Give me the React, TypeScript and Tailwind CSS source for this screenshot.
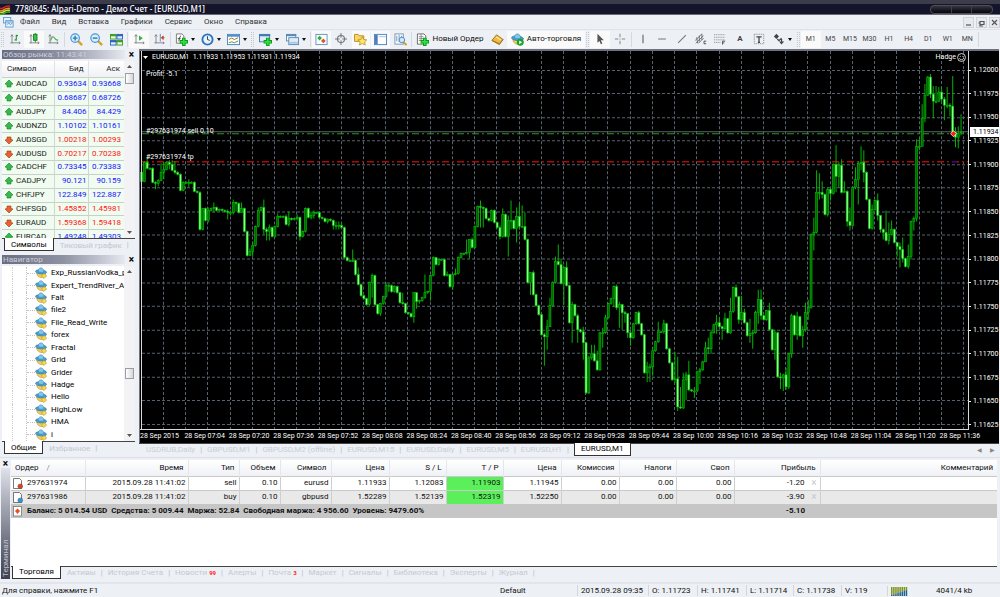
import React from "react";

type Candle = [number, number?, number?];

/* One entry per minute bar: close level, then optional high and low. Each bar opens at the previous close. */
const BARS: Candle[] = [
  [182], [163], [169, 158, 170], [169], [183], [184, 182, 190], [181, 180, 187], [173, 164, 182], [170, 163, 180], [163, 162, 171],
  [165, 161, 170], [171, 161, 172], [173, 162, 175], [175], [191], [183], [183], [183, 180, 188], [183], [192],
  [193], [230], [209, 209, 231], [221], [211, 208, 223], [209], [208, 203, 213], [211], [210], [211],
  [212], [213, 210, 220], [213, 211, 216], [203, 200, 215], [204, 202, 212], [213, 203, 214], [209, 203, 212], [232], [256], [252, 249, 255],
  [246, 242, 257], [227], [211, 208, 228], [208, 207, 212], [230, 200, 235], [232, 228, 241], [228, 225, 241], [237], [227], [217, 214, 228],
  [217], [217], [225, 215, 226], [219, 212, 227], [220], [219], [218, 215, 221], [237, 217, 241], [232], [209],
  [218], [216, 212, 220], [213, 211, 219], [213], [218], [219], [222], [220, 219, 224], [221], [226, 220, 230],
  [226, 222, 230], [226, 222, 230], [228, 223, 229], [258], [261], [261], [261, 250, 262], [275], [285, 268, 286], [296],
  [299], [305], [283], [276, 274, 298], [305], [314], [304, 303, 316], [297], [286, 283, 298], [286, 284, 292],
  [292], [287], [293], [303], [304, 293, 305], [313], [314], [317], [293, 293, 323], [302, 293, 309],
  [301, 300, 304], [298], [293, 275, 299], [292], [276, 275, 301], [258], [265, 258, 266], [260], [260], [276],
  [275, 272, 277], [287], [275, 274, 290], [274, 269, 276], [258], [254], [254], [253, 240, 255], [240, 240, 259], [248, 238, 249],
  [227], [207], [208, 201, 228], [209, 207, 228], [219], [221], [211], [223, 210, 224], [228], [237, 226, 240],
  [215, 209, 238], [237], [221, 216, 257], [221, 201, 230], [229], [217, 208, 243], [227, 204, 230], [227, 206, 228], [240, 213, 241], [283],
  [273, 273, 295], [295, 271, 296], [306], [315], [335], [337, 333, 366], [327, 320, 350], [306, 298, 327], [283], [262, 257, 284],
  [265, 245, 266], [284, 259, 285], [268, 266, 305], [286, 262, 287], [323], [305, 302, 343], [316], [330, 314, 343], [332], [343, 327, 360],
  [393], [358, 356, 394], [354, 345, 360], [361, 345, 362], [370, 351, 371], [333], [333, 328, 348], [318, 315, 334], [304], [299],
  [287, 286, 307], [308, 285, 310], [305, 302, 328], [313, 304, 330], [314, 311, 323], [333, 314, 338], [338, 330, 346], [324], [313], [324, 311, 325],
  [335], [373], [367, 362, 382], [367, 364, 382], [351, 347, 376], [342], [332, 322, 343], [332], [324, 320, 334], [349],
  [363], [380], [379, 352, 383], [407, 357, 411], [408, 387, 409], [380, 373, 409], [375, 372, 400], [390, 361, 391], [391], [391, 387, 398],
  [372], [370, 368, 384], [362], [348, 342, 362], [349, 338, 354], [333, 330, 354], [325], [323, 315, 334], [327, 318, 328], [329, 326, 340],
  [319, 313, 330], [333], [312, 298, 334], [288], [297, 285, 298], [320, 297, 324], [313, 296, 321], [323, 309, 324], [336], [334, 319, 343],
  [333, 331, 349], [313, 311, 334], [300, 290, 324], [316, 290, 320], [320], [311], [330, 303, 331], [350], [333, 330, 360], [377],
  [378, 373, 389], [375, 374, 391], [387, 368, 390], [354, 353, 389], [316, 314, 358], [335, 315, 336], [317, 312, 340], [336], [330, 326, 348], [313, 303, 332],
  [308, 300, 320], [235], [233, 218, 251], [193, 171, 234], [193, 174, 200], [195, 182, 199], [215], [190, 188, 217], [194, 188, 201], [165],
  [177, 146, 193], [166, 163, 188], [193, 160, 194], [192, 182, 193], [222, 191, 227], [226, 208, 231], [188], [180, 168, 190], [164, 162, 205], [163, 147, 171],
  [173, 151, 183], [200], [229], [210, 205, 230], [201], [216, 194, 221], [230, 216, 233], [233, 229, 240], [241, 211, 242], [235, 223, 245],
  [230, 221, 236], [243], [247, 243, 257], [250, 243, 268], [259, 238, 263], [267], [257, 245, 269], [222, 221, 260], [219, 217, 231], [147, 140, 222],
  [147, 139, 151], [119, 105, 147], [96, 85, 123], [78], [95, 75, 99], [102, 87, 119], [102, 87, 104], [93, 88, 103], [100, 88, 102], [106, 98, 121],
  [106, 88, 109], [107, 104, 117], [133, 77, 136], [138, 128, 148], [134, 127, 149], [133, 115, 136],
];

const STEP = 2.7778;
const PRICES = ["1.12000", "1.11975", "1.11950", "1.11925", "1.11900", "1.11875", "1.11850", "1.11825", "1.11800", "1.11775", "1.11750", "1.11725", "1.11700", "1.11675", "1.11650", "1.11625"];
const TIMES = ["2015", "07:04", "07:20", "07:36", "07:52", "08:08", "08:24", "08:40", "08:56", "09:12", "09:28", "09:44", "10:00", "10:16", "10:32", "10:48", "11:04", "11:20", "11:36"];

const QUOTES: [string, string, string, boolean][] = [
  ["AUDCAD", "0.93634", "0.93668", true],
  ["AUDCHF", "0.68687", "0.68726", true],
  ["AUDJPY", "84.406", "84.429", true],
  ["AUDNZD", "1.10102", "1.10161", true],
  ["AUDSGD", "1.00218", "1.00293", false],
  ["AUDUSD", "0.70217", "0.70238", false],
  ["CADCHF", "0.73345", "0.73383", true],
  ["CADJPY", "90.121", "90.159", true],
  ["CHFJPY", "122.849", "122.887", true],
  ["CHFSGD", "1.45852", "1.45981", false],
  ["EURAUD", "1.59368", "1.59418", false],
  ["EURCAD", "1.49248", "1.49303", true],
];

const EXPERTS = ["Exp_RussianVodka_p", "Expert_TrendRiver_A", "Falt", "file2", "File_Read_Write", "forex", "Fractal", "Grid", "Grider", "Hadge", "Hello", "HighLow", "HMA", "i"];

function Svg({ children, wide }: { children: React.ReactNode; wide?: boolean }) {
  return (
    <svg viewBox="0 0 14 14" className={wide ? "h-[13px] w-[13px] shrink-0" : "h-3 w-3 shrink-0"} fill="none" aria-hidden="true">
      {children}
    </svg>
  );
}

const axes = <path d="M3.5 2v10M1.5 11.5H13M2 4l1.500-2L5 4M11.500 10l1.500 1.500-1.500 1.500" stroke="#7a7a7a" strokeWidth="1" />;
const plus = <path d="M9.500 5v9M5 9.500h9" stroke="#0c9a1a" strokeWidth="3.800" />;
const plusIn = <path d="M9.500 6v7M6 9.500h7" stroke="#2fe042" strokeWidth="1.800" />;

const IconBars = () => <Svg>{axes}<path d="M8.500 2v7M8.500 3h2M6.500 8h2" stroke="#1c9a2c" strokeWidth="1.300" /></Svg>;
const IconCandles = () => <Svg>{axes}<path d="M8.500 0v11" stroke="#0b7d1b" /><rect x="6.500" y="1.500" width="4" height="7" fill="#35c745" stroke="#0b7d1b" /></Svg>;
const IconLine = () => <Svg>{axes}<path d="M4 9c2-6 4-5 5-3s2 2 4 2.500" stroke="#4dac56" strokeWidth="1.300" /></Svg>;
const IconZoom = ({ minus }: { minus?: boolean }) => (
  <Svg wide>
    <path d="M8.500 8.500l4.500 4.500" stroke="#d9a520" strokeWidth="2.600" />
    <circle cx="5.500" cy="5.500" r="4.600" fill="#d8efff" stroke="#4b97d0" strokeWidth="1.300" />
    <path d={minus ? "M3 5.500h5" : "M3 5.500h5M5.500 3v5"} stroke="#2a78b8" strokeWidth="1.500" />
  </Svg>
);
const IconTile = () => (
  <Svg wide>
    <rect x="0.500" y="1.500" width="6" height="5" fill="#eafbe0" stroke="#3c9c24" /><rect x="7.500" y="1.500" width="6" height="5" fill="#e0ecff" stroke="#2e62bd" />
    <rect x="0.500" y="8" width="6" height="5" fill="#e0ecff" stroke="#2e62bd" /><rect x="7.500" y="8" width="6" height="5" fill="#eafbe0" stroke="#3c9c24" />
    <path d="M0 2.500h7M7 9h7" stroke="#3c9c24" strokeWidth="2" /><path d="M7 2.500h7M0 9h7" stroke="#2e62bd" strokeWidth="2" />
  </Svg>
);
const IconScroll = () => <Svg>{axes}<path d="M7 3l4.500 3L7 9z" fill="#2cb73b" /></Svg>;
const IconShift = () => <Svg>{axes}<path d="M8.500 1v9" stroke="#4a7fb0" /><path d="M13.500 5.500h-3M12 3.500L9.500 5.500 12 7.500z" stroke="#cc4a28" fill="#cc4a28" /></Svg>;
const IconIndicator = () => <Svg wide><path d="M1.500 1h6l2 2v8h-8z" fill="#fff" stroke="#777" /><path d="M3.500 9c1.500 0 1-6 3-6M3 6h3" stroke="#444" />{plus}{plusIn}</Svg>;
const IconClock = () => <Svg wide><circle cx="7" cy="7" r="5.500" fill="#e6f2ff" stroke="#2f72bd" strokeWidth="2" /><path d="M7 3.500V7l2.500 1" stroke="#333" /></Svg>;
const IconTemplate = () => <Svg wide><rect x="0.500" y="1.500" width="13" height="11" fill="#fff" stroke="#4d83b5" /><path d="M0 3h14" stroke="#4d8fd0" strokeWidth="2" /><path d="M2 7l3-1.500L8 7l4-2" stroke="#b05a2a" /><path d="M2 10.500l3-1 3 1 4-2" stroke="#3a9a48" /></Svg>;
const IconNewChart = () => <Svg wide><rect x="0.500" y="1.500" width="11" height="8" fill="#dcebfa" stroke="#4279ad" /><path d="M0 2.500h12" stroke="#4279ad" strokeWidth="2" />{plus}{plusIn}</Svg>;
const IconProfiles = () => <Svg wide><rect x="0.500" y="1.500" width="10" height="7" fill="#fff" stroke="#5b89b5" /><path d="M0 2.500h11" stroke="#5b89b5" strokeWidth="2" /><rect x="3" y="5" width="10.500" height="7.500" fill="#e0edf8" stroke="#5b89b5" /><path d="M3.500 10.500h9.500" stroke="#a9c6e0" strokeWidth="2" /></Svg>;
const IconMarket = () => <Svg wide><rect x="1" y="1.500" width="12" height="11" fill="#fdfdfd" stroke="#5f93c4" /><path d="M5 3l2.500 2.500L5 8 2.500 5.500z" fill="#2daf39" /><path d="M9 6l2.500 2.500L9 11 6.500 8.500z" fill="#e0542a" /></Svg>;
const IconData = () => <Svg><circle cx="7" cy="7" r="4.200" stroke="#777" strokeWidth="1.200" /><path d="M7 0v5.500M7 8.500V14M0 7h5.500M8.500 7H14" stroke="#777" strokeWidth="1.200" /></Svg>;
const IconNavigator = () => <Svg wide><path d="M0.500 1.500h4l1 1.500h5v6h-10z" fill="#f7d866" stroke="#ba8c1e" /><path d="M9 4l1.500 3 3.300.4-2.400 2.200.7 3.400L9 11.400 5.900 13l.7-3.400-2.400-2.200L7.500 7z" fill="#ffe66b" stroke="#b58a1a" strokeWidth=".8" /></Svg>;
const IconTerminal = () => <Svg wide><rect x="0.500" y="1.500" width="13" height="11" fill="#fff" stroke="#4785c2" /><path d="M2.500 2v10" stroke="#4785c2" strokeWidth="3" /><path d="M5 4h8" stroke="#9dc2e6" /><path d="M2 5h1M2 7.500h1" stroke="#d33" /></Svg>;
const IconTester = () => <Svg wide><rect x="1" y="1" width="9" height="11" fill="#fff" stroke="#7494b5" /><path d="M3 3v6M5.500 2v8M8 3v6" stroke="#6b93b8" /><circle cx="8.500" cy="7.500" r="3" fill="#cfe6fa" stroke="#4d87bb" /><path d="M10.500 10l3 3" stroke="#cf9a28" strokeWidth="2" /></Svg>;
const IconOrder = () => <Svg wide><path d="M1.500 1h7l2 2v9h-9z" fill="#fff" stroke="#666" /><path d="M3 4h5M3 6h5M3 8h3M5.500 1v8" stroke="#888" />{plus}{plusIn}</Svg>;
const IconGold = () => <Svg wide><path d="M1 8l5-6 7 5-4 5.500z" fill="#eebb44" stroke="#a66d13" /><path d="M1 8l8 3.500 4-4.500" stroke="#a66d13" /><path d="M5.500 4l5 3.500" stroke="#ffe59a" strokeWidth="1.500" /></Svg>;
const Hat = () => (
  <>
    <path d="M2 7c.5 6 9 7.500 10 1z" fill="#f3cf5b" stroke="#b78b25" strokeWidth=".7" />
    <ellipse cx="7" cy="5.700" rx="6.500" ry="2.500" transform="rotate(6 7 5.700)" fill="#4a9fd2" stroke="#2e739f" strokeWidth=".6" />
    <path d="M3.700 5c0-5.500 6.600-5.500 6.600.5-1.600 1-5 1-6.600-.5z" fill="#7cc8ee" stroke="#2e739f" strokeWidth=".5" />
  </>
);
const IconAuto = () => <Svg wide><Hat /><circle cx="10" cy="10" r="3.700" fill="#18a52c" /><path d="M8.800 8l3.200 2-3.200 2z" fill="#fff" /></Svg>;
const IconExpert = () => <Svg><Hat /><path d="M10.500 7.500l3 3-3 3-3-3z" fill="#f9d84e" stroke="#b5921f" strokeWidth=".7" /></Svg>;
const IconCursor = () => <Svg><path d="M4 1v10.500l2.400-2.300L8 13l1.700-.8L8 8.500h3.500z" fill="#555" /></Svg>;
const IconCross = () => <Svg><path d="M7 1v4M7 9v4M1 7h4M9 7h4M6.500 7h1" stroke="#888" strokeWidth="1.200" /></Svg>;
const IconVert = () => <Svg><path d="M7 2v10" stroke="#555" strokeWidth="1.200" /></Svg>;
const IconHoriz = () => <Svg><path d="M2.500 7h9" stroke="#777" strokeWidth="1.200" /></Svg>;
const IconTrend = () => <Svg><path d="M2.500 11.500l9-9" stroke="#777" strokeWidth="1.200" /></Svg>;
const IconChannel = () => <Svg><path d="M0 9l8-8M1 12l9-9M2 5l1 7M5 3v7M8 1v7M4 12l6-6" stroke="#666" /><path d="M13 9.500h-2.500v3H13" stroke="#444" /></Svg>;
const IconFibo = () => <Svg><path d="M0 2h13M0 5h13M0 8h13M0 11h8" stroke="#888" strokeDasharray="1.500 1" /><path d="M10 13.500v-4h3M10 11.500h2" stroke="#444" /></Svg>;
const IconLabel = () => <Svg><rect x="1.500" y="1.500" width="11" height="11" stroke="#888" strokeDasharray="1.500 1" /><path d="M4 4.500h6M7 4.500V11M5.800 11h2.400" stroke="#444" strokeWidth="1.500" /></Svg>;
const IconArrows = () => <Svg><path d="M1 4l3-3 3 3-3 3zM7 10h6l-3 3.500z" fill="#444" /><path d="M5 7l2 2 3-3M10 7v4" stroke="#444" strokeWidth="1.400" /></Svg>;

function Tool({ label, active, menu, children }: { label: string; active?: boolean; menu?: boolean; children: React.ReactNode }) {
  return (
    <button type="button" aria-label={label} className={`flex h-[17px] flex-1 items-center justify-center gap-[3px] text-[7px] text-[#444] ${active ? "bg-[#fafafb]" : ""}`}>
      {children}
      {menu && <Caret />}
    </button>
  );
}
const Caret = () => <svg viewBox="0 0 4 3" className="h-[3px] w-1"><path d="M0 0h4L2 3z" fill="#111" /></svg>;
const Sep = () => <i className="mx-px h-[15px] w-px shrink-0 bg-[#d5d8e0]" />;
const Grip = () => <i className="mx-px h-[15px] w-[3px] shrink-0 border-x border-dotted border-[#c3c7d0]" />;

function Toolbar() {
  return (
    <div className="flex h-[19px] shrink-0 items-center border-t border-[#dfe3eb] bg-[#edf0f5]">
      <Grip />
      <div className="flex w-[58px]">
        <Tool label="Бары"><IconBars /></Tool>
        <Tool label="Японские свечи" active><IconCandles /></Tool>
        <Tool label="Линия"><IconLine /></Tool>
      </div>
      <Sep />
      <div className="flex w-[60px]">
        <Tool label="Увеличить"><IconZoom /></Tool>
        <Tool label="Уменьшить"><IconZoom minus /></Tool>
        <Tool label="Окна мозаикой"><IconTile /></Tool>
      </div>
      <Sep />
      <div className="flex w-10">
        <Tool label="Автопрокрутка" active><IconScroll /></Tool>
        <Tool label="Сдвиг графика"><IconShift /></Tool>
      </div>
      <Sep />
      <div className="flex w-[78px]">
        <Tool label="Индикаторы" menu><IconIndicator /></Tool>
        <Tool label="Периоды" menu><IconClock /></Tool>
        <Tool label="Шаблоны" menu><IconTemplate /></Tool>
      </div>
      <Grip />
      <div className="flex w-[54px]">
        <Tool label="Новый график" menu><IconNewChart /></Tool>
        <Tool label="Профили" menu><IconProfiles /></Tool>
      </div>
      <Sep />
      <div className="flex w-[98px] gap-px">
        <Tool label="Обзор рынка" active><IconMarket /></Tool>
        <Tool label="Окно данных"><IconData /></Tool>
        <Tool label="Навигатор" active><IconNavigator /></Tool>
        <Tool label="Терминал" active><IconTerminal /></Tool>
        <Tool label="Тестер стратегий"><IconTester /></Tool>
      </div>
      <Sep />
      <button type="button" className="flex h-[17px] w-[74px] items-center justify-center gap-[3px] whitespace-nowrap text-[8px] text-[#111]"><IconOrder />Новый Ордер</button>
      <div className="flex w-5"><Tool label="MetaEditor"><IconGold /></Tool></div>
      <button type="button" className="flex h-[17px] w-[78px] items-center justify-center gap-[3px] whitespace-nowrap bg-[#fafafb] text-[8px] text-[#111]"><IconAuto />Авто-торговля</button>
      <Grip />
      <div className="flex w-10">
        <Tool label="Курсор" active><IconCursor /></Tool>
        <Tool label="Перекрестие"><IconCross /></Tool>
      </div>
      <Sep />
      <div className="flex w-[136px]">
        <Tool label="Вертикальная линия"><IconVert /></Tool>
        <Tool label="Горизонтальная линия"><IconHoriz /></Tool>
        <Tool label="Трендовая линия"><IconTrend /></Tool>
        <Tool label="Канал"><IconChannel /></Tool>
        <Tool label="Фибоначчи"><IconFibo /></Tool>
        <Tool label="Текст"><b className="text-[8px]">A</b></Tool>
        <Tool label="Метка"><IconLabel /></Tool>
      </div>
      <div className="flex w-[27px]"><Tool label="Стрелки" menu><IconArrows /></Tool></div>
      <Grip />
      <div className="flex w-[176px]">
        {["M1", "M5", "M15", "M30", "H1", "H4", "D1", "W1", "MN"].map((p, i) => <Tool key={p} label={p} active={i === 0}>{p}</Tool>)}
      </div>
      <Sep />
    </div>
  );
}

function PaneHeader({ title }: { title: string }) {
  return (
    <div className="flex h-[9px] shrink-0 items-center gap-1">
      <h2 className="h-[9px] flex-1 bg-linear-to-r from-[#6a6d82] via-[#8f92a3] to-[#e6e9f0] pl-px text-[8px] leading-[9px] text-[#cdd0da]">{title}</h2>
      <button type="button" aria-label="Закрыть" className="mr-px text-[10px] leading-[9px] font-bold text-black">×</button>
    </div>
  );
}

function ScrollTrack({ thumb }: { thumb: string }) {
  return (
    <div className="flex w-[11px] shrink-0 flex-col items-center bg-[#f3f3f5] py-1">
      <svg viewBox="0 0 5 3" className="h-[3px] w-[5px]"><path d="M0 3h5L2.500 0z" fill="#555" /></svg>
      <div className={thumb} />
      <div className="h-[11px] w-[9px] border border-[#9a9da6] bg-linear-to-r from-white to-[#d5d7dc]" />
      <div className="flex-1" />
      <svg viewBox="0 0 5 3" className="h-[3px] w-[5px]"><path d="M0 0h5L2.500 3z" fill="#555" /></svg>
    </div>
  );
}

function PaneTabs({ active, other }: { active: string; other: string }) {
  return (
    <div className="flex h-[13px] shrink-0 border-t border-[#444] pl-0.5 text-[8px] leading-[11px]">
      <button type="button" className="-mt-px h-[13px] border border-t-0 border-[#333] bg-white px-[6px] text-black">{active}</button>
      <button type="button" className="ml-[6px] text-[#c3c7d2]">{other}</button>
      <span className="ml-[5px] text-[#b9bdc7]">|</span>
    </div>
  );
}

function MarketWatch() {
  return (
    <section className="flex flex-col">
      <PaneHeader title="Обзор рынка: 11:43:41" />
      <div className="mt-0.5 flex h-[177px] overflow-hidden bg-white">
        <div className="min-w-0 flex-1">
          <table className="w-full table-fixed border-collapse text-[8px] leading-[10px]">
            <colgroup><col className="w-[52px]" /><col className="w-[34px]" /><col /></colgroup>
            <thead>
              <tr className="h-4 bg-linear-to-b from-white to-[#eff1f5] text-[#222]">
                <th className="border-r border-[#e0e2e8] pl-[5px] text-left font-normal">Символ</th>
                <th className="border-r border-[#e0e2e8] pr-1 text-right font-normal">Бид</th>
                <th className="pr-1 text-right font-normal">Аск</th>
              </tr>
            </thead>
          </table>
          <table className="h-[166px] w-full table-fixed border-collapse text-[8px] leading-[10px]">
            <colgroup><col className="w-[52px]" /><col className="w-[34px]" /><col /></colgroup>
            <tbody>
              {QUOTES.map(([s, bid, ask, up]) => (
                <tr key={s} className="border-t border-[#c9cfc9] bg-[#effcef]">
                  <td className="border-r border-[#d0d6d0] p-0">
                    <div className="flex items-center gap-[3px] pl-[3px] text-[#222]">
                      <svg viewBox="0 0 8 8" className="h-2 w-2 shrink-0">
                        <path d={up ? "M4 0l4 4-2 .5V7H2V4.500L0 4z" : "M4 8L0 4l2-.5V1h4v2.500L8 4z"} fill={up ? "#34b94a" : "#ec5f30"} stroke={up ? "#1d7a2d" : "#9c3a17"} strokeWidth=".6" />
                      </svg>
                      {s}
                    </div>
                  </td>
                  <td className={`border-r border-[#d0d6d0] p-0 pr-px text-right ${up ? "text-[#1515ff]" : "text-[#ff1515]"}`}>{bid}</td>
                  <td className={`p-0 pr-[3px] text-right ${up ? "text-[#1515ff]" : "text-[#ff1515]"}`}>{ask}</td>
                </tr>
              ))}
            </tbody>
          </table>
        </div>
        <ScrollTrack thumb="h-[5px]" />
      </div>
      <PaneTabs active="Символы" other="Тиковый график" />
    </section>
  );
}

function Navigator() {
  return (
    <section className="flex min-h-0 flex-1 flex-col">
      <PaneHeader title="Навигатор" />
      <div className="mt-0.5 flex min-h-0 flex-1 bg-white">
        <ul className="flex min-w-0 flex-1 flex-col overflow-hidden pt-px pl-[10px]">
          {EXPERTS.map((n) => (
            <li key={n} className="flex min-h-0 flex-1 items-center border-l border-dotted border-[#cfcfcf] pl-[13px]">
              <i className="h-full w-0 shrink-0 border-l border-dotted border-[#c4c4c4]" />
              <i className="w-2 shrink-0 border-t border-dotted border-[#c4c4c4]" />
              <span className="flex items-center gap-1 whitespace-nowrap text-[8px] leading-[10px] text-black"><IconExpert />{n}</span>
            </li>
          ))}
        </ul>
        <ScrollTrack thumb="h-[95px]" />
      </div>
      <PaneTabs active="Общие" other="Избранное" />
    </section>
  );
}

function Plot() {
  return (
    <svg viewBox="140 52 829 377" preserveAspectRatio="none" className="absolute inset-0 h-full w-full" aria-label="EURUSD,M1">
      <g stroke="#56636f" strokeWidth="1" strokeDasharray="3 2">
        {Array.from({ length: 37 }, (_, i) => <path key={i} d={`M${Math.round(163 + i * 22.222) + 0.5} 52V429`} />)}
        {PRICES.map((p, i) => <path key={p} d={`M142 ${Math.round(70.5 + i * 23.57) + 0.5}H968`} />)}
      </g>
      <path d="M142 132.500H969" stroke="#5b636e" />
      <path d="M142 134.500H969" stroke="#259a25" strokeDasharray="7 3 2 3" />
      <path d="M142 162.500H969" stroke="#b00808" strokeWidth="1.500" strokeDasharray="7 3 2 3" />
      {BARS.map(([close, high, low], i) => {
        const open = i === 0 ? 173 : BARS[i - 1][0];
        const top = Math.min(open, close);
        const bottom = Math.max(open, close);
        const x = 141.1 + i * STEP;
        return (
          <g key={i}>
            <path d={`M${x + 0.5} ${Math.min(high ?? top - 1, top)}V${Math.max(low ?? bottom + 1, bottom)}`} stroke="#00b400" />
            <rect x={x - 0.5} y={top} width="2" height={Math.max(bottom - top, 1)} fill={close > open ? "#8dff8d" : "#006a00"} stroke="#00bc00" strokeWidth=".6" />
          </g>
        );
      })}
      <path d="M950.500 134.500l3-3 3 3-3 3z" fill="#ff1a1a" stroke="#fff" strokeWidth=".7" />
      <path d="M952 162.500h5" stroke="#0000c8" />
      <path d="M141.500 52V429M968.500 52V429" stroke="#d8d8d8" />
    </svg>
  );
}

function Chart() {
  return (
    <div className="flex min-h-0 flex-1 flex-col border-t-2 border-l border-[#6f727c] bg-black text-[7px] text-white">
      <div className="flex min-h-0 flex-1">
        <div className="relative min-w-0 flex-1 border-b border-[#d8d8d8]">
          <Plot />
          <div className="absolute inset-x-0 top-0 flex items-center justify-between pr-[3px] pl-[3px] leading-[12px]">
            <span className="flex items-center gap-1 whitespace-pre"><svg viewBox="0 0 5 3" className="h-[3px] w-[5px]"><path d="M0 0h5L2.500 3z" fill="#fff" /></svg>EURUSD,M1  1.11933 1.11953 1.11931 1.11934</span>
            <span className="flex items-center gap-px">Hadge<svg viewBox="0 0 8 8" className="h-[9px] w-[9px]" fill="none" stroke="#fff" strokeWidth=".7"><circle cx="4" cy="4" r="3.500" /><path d="M2.500 3h.8M4.800 3h.8M2 4.800c1 1.500 3 1.500 4 0" /></svg></span>
          </div>
          <span className="absolute top-[18px] left-[6px] leading-[10px]">Profit: -5.1</span>
          <span className="absolute top-[20%] left-[6px] leading-[8px]">#297631974 sell 0.10</span>
          <span className="absolute top-[27%] left-[6px] leading-[8px]">#297631974 tp</span>
        </div>
        <div className="relative flex w-[30px] shrink-0 flex-col justify-between pt-[14px] leading-[10px]">
          {PRICES.map((p) => <span key={p} className="flex items-center gap-0.5"><i className="h-px w-0.5 bg-white" />{p}</span>)}
          <span className="absolute top-[20%] right-0 left-px bg-white pl-[3px] text-black">1.11934</span>
        </div>
      </div>
      <div className="grid h-[13px] shrink-0 grid-cols-[repeat(19,minmax(0,1fr))] pr-[15px] leading-[12px] whitespace-nowrap">
        {TIMES.map((t) => <span key={t}>28 Sep {t}</span>)}
      </div>
    </div>
  );
}

const CHART_TABS = ["USDRUB,Daily", "GBPUSD,M1", "GBPUSD,M2 (offline)", "EURUSD,M15", "EURUSD,Daily", "EURUSD,M5", "EURUSD,H1"];

function ChartTabs() {
  return (
    <div className="flex h-[14px] shrink-0 items-start border-t border-[#444] pl-[7px] text-[8px] leading-[12px] text-[#c9cdd7]">
      {CHART_TABS.map((t) => (
        <React.Fragment key={t}><button type="button" className="whitespace-nowrap">{t}</button><span className="px-[5px] text-[#b9bdc7]">|</span></React.Fragment>
      ))}
      <button type="button" className="-mt-px h-[13px] border border-t-0 border-[#333] bg-white px-[6px] text-black">EURUSD,M1</button>
      <span className="flex-1" />
      <button type="button" aria-label="Назад" className="px-1 text-[6px] text-[#888]">◀</button>
      <button type="button" aria-label="Вперед" className="px-1 text-[6px] text-[#888]">▶</button>
    </div>
  );
}

const COLS = ["w-[74px]", "w-[103px]", "w-[51px]", "w-[41px]", "w-[51px]", "w-[58px]", "w-[57px]", "w-[57px]", "w-[58px]", "w-[58px]", "w-[57px]", "w-[58px]", "w-[86px]", ""];
const HEADS = ["Время", "Тип", "Объем", "Символ", "Цена", "S / L", "T / P", "Цена", "Комиссия", "Налоги", "Своп", "Прибыль", "Комментарий"];
const ORDERS = [
  ["297631974", "2015.09.28 11:41:02", "sell", "0.10", "eurusd", "1.11933", "1.12083", "1.11903", "1.11945", "0.00", "0.00", "0.00", "-1.20"],
  ["297631986", "2015.09.28 11:41:02", "buy", "0.10", "gbpusd", "1.52289", "1.52139", "1.52319", "1.52250", "0.00", "0.00", "0.00", "-3.90"],
];
const TERM_TABS: [string, string?][] = [["Активы"], ["История Счета"], ["Новости", "99"], ["Алерты"], ["Почта", "3"], ["Маркет"], ["Сигналы"], ["Библиотека"], ["Эксперты"], ["Журнал"]];

const Doc = ({ dot }: { dot: string }) => (
  <svg viewBox="0 0 10 11" className="h-[11px] w-[10px] shrink-0"><path d="M.5.500h6l2 2v8h-8z" fill="#fff" stroke="#555" strokeWidth=".8" /><circle cx="7.300" cy="8.300" r="2.400" fill={dot} stroke="#444" strokeWidth=".4" /></svg>
);

function Terminal() {
  return (
    <section className="flex h-[125px] shrink-0 border-t border-[#dcdfe7] pt-0.5 pr-[3px] pb-[3px]">
      <div className="flex w-[11px] shrink-0 flex-col items-center">
        <button type="button" aria-label="Закрыть" className="text-[10px] leading-[8px] font-bold text-black">×</button>
        <h2 className="flex min-h-0 w-[9px] flex-1 rotate-180 items-center bg-linear-to-t from-[#dfe2ea] to-[#3f4152] pt-0.5 text-[8px] leading-[9px] font-normal text-[#bfc2cc] [writing-mode:vertical-rl]">Терминал</h2>
      </div>
      <div className="flex min-w-0 flex-1 flex-col">
        <div className="flex-1 bg-white">
          <table className="w-full table-fixed border-collapse text-right text-[8px] leading-[10px] text-[#111]">
            <colgroup>{COLS.map((c, i) => <col key={i} className={c} />)}</colgroup>
            <thead>
              <tr className="h-4 bg-linear-to-b from-white to-[#eff1f5]">
                <th className="border-r border-[#e4e6ec] p-0 pl-1 text-left font-normal whitespace-pre">Ордер    <span className="text-[#888]">/</span></th>
                {HEADS.map((h, i) => <th key={i} className="border-r border-[#e4e6ec] p-0 pr-1 font-normal last:border-0">{h}</th>)}
              </tr>
            </thead>
            <tbody>
              {ORDERS.map((r, n) => (
                <tr key={r[0]} className={`h-[14px] border-t border-[#c9c9c9] ${n ? "bg-[#e9e9e9]" : "bg-white"}`}>
                  {r.map((v, i) => (
                    <td key={i} className={`border-r border-[#cfcfcf] p-0 pr-0.5 ${i === 7 ? "bg-[#5bf05b]" : ""}`}>
                      {i === 0 ? <span className="flex items-center gap-1 pl-0.5"><Doc dot={n ? "#2d9ad8" : "#e0431c"} />{v}</span>
                        : i === 12 ? <span className="flex items-center justify-end gap-[6px]">{v}<button type="button" aria-label="Закрыть ордер" className="w-[7px] text-[10px] text-[#c5c9d0]">×</button></span> : v}
                    </td>
                  ))}
                  <td className="p-0" />
                </tr>
              ))}
              <tr className="h-[14px] bg-[#c6c6c6] font-bold">
                <td colSpan={12} className="p-0 text-left">
                  <span className="flex items-center gap-1 pl-0.5 whitespace-pre">
                    <svg viewBox="0 0 10 11" className="h-[11px] w-[10px]"><rect x=".5" y=".5" width="8" height="9.500" fill="#fff" stroke="#777" strokeWidth=".8" /><path d="M4.500 2.500L7 5 4.500 8 2 5z" fill="#e5501f" /></svg>
                    Баланс: 5 014.54 USD  Средства: 5 009.44  Маржа: 52.84  Свободная маржа: 4 956.60  Уровень: 9479.60%
                  </span>
                </td>
                <td className="p-0 pr-[15px]">-5.10</td>
                <td className="p-0" />
              </tr>
            </tbody>
          </table>
        </div>
        <div className="flex h-[13px] shrink-0 items-start border-t border-[#444] pl-px text-[8px] leading-[12px] text-[#c5c9d3]">
          <button type="button" className="-mt-px h-[13px] border border-t-0 border-[#333] bg-white px-[6px] text-black">Торговля</button>
          <span className="w-[6px]" />
          {TERM_TABS.map(([t, n]) => (
            <React.Fragment key={t}><button type="button" className="whitespace-nowrap">{t}{n && <b className="pl-0.5 text-[6px] text-[#f22]">{n}</b>}</button><span className="px-[5px] text-[#b9bdc7]">|</span></React.Fragment>
          ))}
        </div>
      </div>
    </section>
  );
}

function StatusBar() {
  const cell = "border-l border-[#d3d6de] pl-[3px] leading-[11px]";
  return (
    <footer className="flex h-[15px] shrink-0 items-center border-t-2 border-[#e2e5ec] bg-[#edf0f5] pr-[3px] text-[8px] whitespace-nowrap text-[#111]">
      <span className="flex-1 pl-0.5">Для справки, нажмите F1</span>
      <span className="w-[77px]">Default</span>
      <span className={`w-[71px] ${cell}`}>2015.09.28 09:35</span>
      <span className={`w-[49px] ${cell}`}>O: 1.11723</span>
      <span className={`w-[49px] ${cell}`}>H: 1.11741</span>
      <span className={`w-[47px] ${cell}`}>L: 1.11714</span>
      <span className={`w-[48px] ${cell}`}>C: 1.11738</span>
      <span className={`w-[46px] ${cell}`}>V: 119</span>
      <span className={`w-[49px] ${cell}`}>
        <svg viewBox="0 0 17 9" className="mt-px h-[9px] w-[17px]">
          {[0, 1, 2, 3, 4, 5, 6, 7].map((i) => <g key={i}><rect x={i * 2.1} y="0" width="1.500" height={8 - i * 0.7} fill="#82921f" /><rect x={i * 2.1} y={8 - i * 0.7} width="1.500" height={1 + i * 0.7} fill="#20618f" /></g>)}
        </svg>
      </span>
      <span className="w-[61px]">4041/4 kb</span>
    </footer>
  );
}

export default function App() {
  return (
    <div className="flex h-screen min-h-[480px] flex-col overflow-hidden bg-[#edf0f5] font-['Roboto','Noto_Sans',sans-serif]">
      <header className="flex h-[15px] shrink-0 items-center justify-between border-t-4 border-b border-t-[#3c3d4a] border-b-[#6b6a78] bg-[#14152a]">
        <div className="flex items-center gap-1">
          <svg viewBox="0 0 12 11" className="h-[11px] w-[11px]" fill="none" strokeWidth="1.700"><path d="M0 4c4 2 5-4 11-2" stroke="#d22" /><path d="M0 6.500c4 2 5-4 11-2" stroke="#e8902a" /><path d="M0 8.500c4 2 5-4 11-2" stroke="#d6d62b" /><path d="M0 10.500c4 2 5-4 11-2" stroke="#2db52d" /></svg>
          <h1 className="font-['Noto_Sans'] text-[8px] leading-[10px] font-medium whitespace-nowrap text-white">7780845: Alpari-Demo - Демо Счет - [EURUSD,M1]</h1>
        </div>
        <div className="mr-[7px] flex h-[9px] w-[63px] divide-x divide-[#3d3e4a] rounded-sm border border-[#4c4d58] bg-linear-to-b from-[#34353f] to-[#06060c]">
          <button type="button" aria-label="Свернуть" className="flex-1" /><button type="button" aria-label="Развернуть" className="flex-1" /><button type="button" aria-label="Закрыть" className="flex-1" />
        </div>
      </header>
      <nav className="flex h-[14px] shrink-0 items-center pl-[3px] text-[8px] text-[#333]">
        <svg viewBox="0 0 12 12" className="mr-[6px] h-[11px] w-[11px]" fill="#e6f1fb" stroke="#5f9bd0"><rect x=".5" y=".5" width="8" height="6" /><rect x="3" y="4" width="8" height="7" /><path d="M4.500 8l2-1.500 1.500 2 2-2M3 5.500h8" fill="none" /></svg>
        {["Файл", "Вид", "Вставка", "Графики", "Сервис", "Окно", "Справка"].map((m) => <button key={m} type="button" className="mr-3">{m}</button>)}
        <span className="flex-1" />
        <div className="flex gap-0.5">
          {["M2 7h5", "M3 3.500h4v3H3zM1.500 5h1.500v3h3", "M2 2l5 5M7 2L2 7"].map((d, i) => (
            <button key={d} type="button" aria-label={["Свернуть окно", "Восстановить окно", "Закрыть окно"][i]} className="flex h-[11px] w-[11px] items-center justify-center border border-[#d0d3da] bg-[#e8eaef]"><svg viewBox="0 0 9 9" className="h-[9px] w-[9px]" fill="none" stroke="#555" strokeWidth="1.200"><path d={d} /></svg></button>
          ))}
        </div>
      </nav>
      <Toolbar />
      <main className="flex min-h-0 flex-1">
        <aside className="flex w-[139px] shrink-0 flex-col gap-1 pt-0.5 pr-[4px] pb-[3px] pl-0.5">
          <MarketWatch />
          <Navigator />
        </aside>
        <div className="flex min-w-0 flex-1 flex-col pt-px pr-px">
          <Chart />
          <ChartTabs />
        </div>
      </main>
      <Terminal />
      <StatusBar />
    </div>
  );
}
